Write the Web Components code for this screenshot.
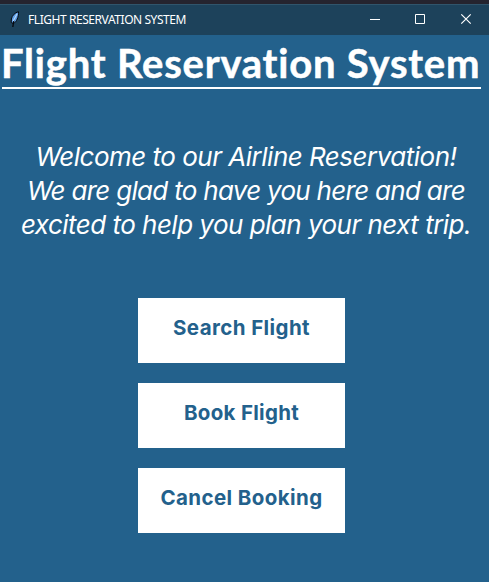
<!DOCTYPE html>
<html lang="en"><head><meta charset="utf-8"><title>Flight Reservation System</title>
<style>
html,body{margin:0;width:489px;height:582px;overflow:hidden;background:#23618c}
</style></head><body><app-window></app-window>
<script>
/* A single line of text whose letter spacing is tuned to fill a given width. */
class FitLine extends HTMLElement{
  constructor(){super();this.attachShadow({mode:'open'}).innerHTML='<style>:host{display:block;white-space:nowrap;width:max-content}span{display:inline-block}</style><span><slot></slot></span>';}
  connectedCallback(){
    const s=this.shadowRoot.querySelector('span'),n=this.textContent.length;
    const gap=(Number(this.getAttribute('width'))-s.getBoundingClientRect().width)/n;
    this.style.letterSpacing=gap.toFixed(3)+'px';
  }
}
class TitleBar extends HTMLElement{
  constructor(){super();this.attachShadow({mode:'open'}).innerHTML=`<style>
:host{display:flex;box-sizing:border-box;height:35px;background:#1d425b;border-top:4px solid #25242f;align-items:stretch;box-shadow:inset 0 1px #30556c;color:#fff;font:12px/31px "Noto Sans","Open Sans",sans-serif}
.feather{width:12px;height:17px;margin:7px 7px 0 9px}
fit-line{flex:1}
.controls{display:flex;width:137px}
.controls svg{width:46px;height:31px;flex:none}
</style>
<svg class="feather" viewBox="0 0 12 17"><path d="M9.500.7C6 1.500 3 4.600 2.400 8L2.200 11.500 4.500 12.500C7.500 11 9.800 6 9.500.7Z" fill="#5f9fe8" stroke="#05080d" stroke-width="1"/><path d="M4.800 9.500 3.800 16" fill="none" stroke="#05080d" stroke-width="1.300"/><path d="M8 3 4.200 10" stroke="#b9dafa" stroke-width="1.100"/></svg>
<fit-line width="158">FLIGHT RESERVATION SYSTEM</fit-line>
<div class="controls">
<svg viewBox="0 0 46 31"><path d="M18 15.500h10" stroke="#fff"/></svg>
<svg viewBox="0 0 46 31"><path d="M17.500 10.500h9v9h-9z" fill="none" stroke="#fff"/></svg>
<svg viewBox="0 0 46 31"><path d="M17.300 10.300l9.400 9.400M26.700 10.300l-9.400 9.400" stroke="#fff" stroke-width="1.200"/></svg>
</div>`;}
}
class ActionButton extends HTMLElement{
  constructor(){super();this.attachShadow({mode:'open'}).innerHTML=`<style>
:host{display:flex;justify-content:center;box-sizing:border-box;width:207px;height:65px;padding-top:15px;background:#fff;color:#23618c;font:700 20.500px/30px Inter,sans-serif}
</style><slot></slot>`;}
}
class AppWindow extends HTMLElement{
  constructor(){super();this.attachShadow({mode:'open'}).innerHTML=`<style>
:host{display:flex;flex-direction:column;width:489px;height:582px;background:#23618c;color:#fff}
h1{margin:0 0 0 2px;width:479px;padding-top:2px;box-sizing:border-box;border-bottom:2px solid #fff;height:54px;font:700 40px/52px Lato,sans-serif}
h1 fit-line{-webkit-text-stroke:.5px #fff;margin-left:-1px}
.welcome{display:flex;flex-direction:column;align-items:center;margin:51px 0 0 3px;font:italic 400 26px/34px Inter,sans-serif}
.actions{display:flex;flex-direction:column;gap:20px;margin:56px 0 0 138px}
</style>
<title-bar></title-bar>
<h1><fit-line width="480">Flight Reservation System</fit-line></h1>
<div class="welcome"><fit-line width="421">Welcome to our Airline Reservation!</fit-line><fit-line width="438">We are glad to have you here and are</fit-line><fit-line width="450">excited to help you plan your next trip.</fit-line></div>
<div class="actions"><action-button><fit-line width="137">Search Flight</fit-line></action-button><action-button><fit-line width="115">Book Flight</fit-line></action-button><action-button><fit-line width="162">Cancel Booking</fit-line></action-button></div>`;}
}
customElements.define('fit-line',FitLine);
customElements.define('title-bar',TitleBar);
customElements.define('action-button',ActionButton);
customElements.define('app-window',AppWindow);
</script></body></html>
